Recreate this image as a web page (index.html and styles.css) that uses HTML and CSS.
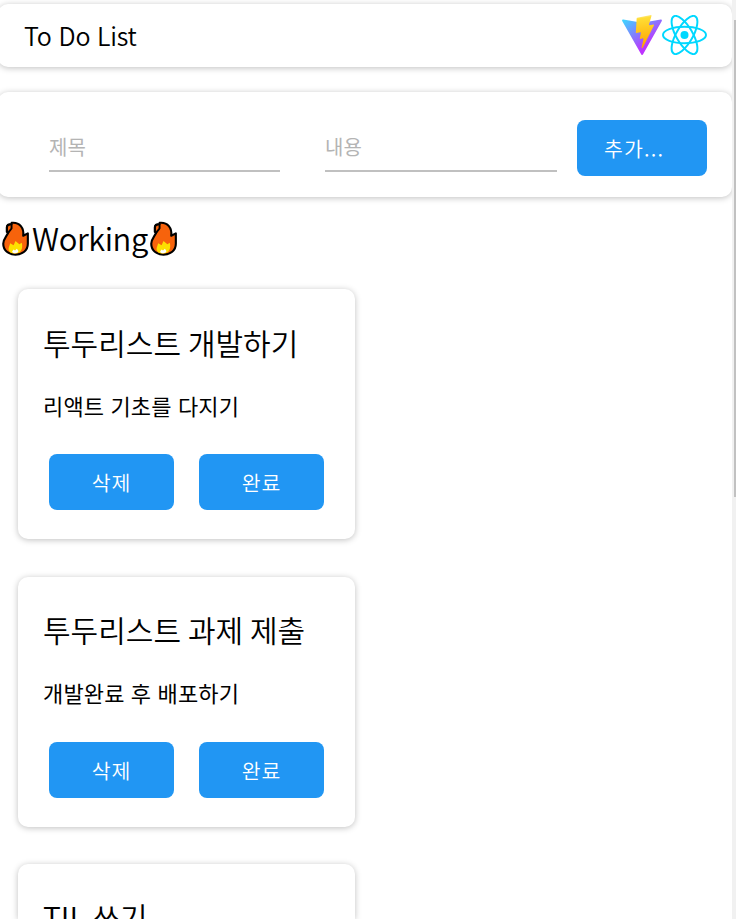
FILE: index.html
```
<!DOCTYPE html>
<html lang="ko">
<head>
    <meta charset="UTF-8">
    <meta name="viewport" content="width=device-width, initial-scale=1.0">
    <title>To Do List</title>
    <link rel="stylesheet" href="styles.css">
</head>
<body>
    <!-- shared icon shapes -->
    <svg class="symbols" width="0" height="0">
        <symbol id="fire" viewBox="0 0 28 36">
            <path d="M10 1.8C18.500 1 23 7 22 15.200L26.800 12.700V23.500C26.800 30.500 21 34.700 14 34.700S1.300 30.500 1.300 23.500C1.300 18 5.300 15.500 6.500 11.500L5 11V6.500C5 4 7 3 10 3Z" fill="#f7630c" stroke="#000" stroke-width="2.200" stroke-linejoin="round"/>
            <path d="M5.200 11V6.500C5.200 4.200 7.200 3.200 9.900 3.800V7.500C9 9.200 7.600 10 6.500 12Z" fill="#f7630c" stroke="#000" stroke-width="2"/>
            <path d="M7 27.500L8.500 22.800L12 25L14 20.500L18 24L20.500 22.500C22 28 20 33.500 14 33.600C9 33.600 6 31 7 27.500Z" fill="#fde000"/>
            <path d="M10.500 31.500L12 29.500L13.500 30.500L15.500 28.500L17 31C17 34 10.500 34 10.500 31.500Z" fill="#fff"/>
        </symbol>
    </svg>

    <div class="layout">
        <header class="header">
            <span>To Do List</span>
            <div class="logos">
                <svg class="vite" viewBox="0 0 256 257">
                    <defs>
                        <linearGradient id="viteBlue" x1="-.828%" x2="57.636%" y1="7.652%" y2="78.411%">
                            <stop offset="0%" stop-color="#41D1FF"/>
                            <stop offset="100%" stop-color="#BD34FE"/>
                        </linearGradient>
                        <linearGradient id="viteYellow" x1="43.376%" x2="50.316%" y1="2.242%" y2="89.030%">
                            <stop offset="0%" stop-color="#FFEA83"/>
                            <stop offset="8.333%" stop-color="#FFDD35"/>
                            <stop offset="100%" stop-color="#FFA800"/>
                        </linearGradient>
                    </defs>
                    <path fill="url(#viteBlue)" d="M255.153 37.938L134.897 252.976c-2.483 4.440-8.862 4.466-11.382.048L.875 37.958c-2.746-4.814 1.371-10.646 6.827-9.670l120.385 21.517a6.537 6.537 0 0 0 2.322-.004l117.867-21.483c5.438-.991 9.574 4.796 6.877 9.620Z"/>
                    <path fill="url(#viteYellow)" d="M185.432.063L96.440 17.501a3.268 3.268 0 0 0-2.634 3.014l-5.474 92.456a3.268 3.268 0 0 0 3.997 3.378l24.777-5.718c2.318-.535 4.413 1.507 3.936 3.838l-7.361 36.047c-.495 2.426 1.782 4.500 4.151 3.780l15.304-4.649c2.372-.720 4.652 1.360 4.150 3.788l-11.698 56.621c-.732 3.542 3.979 5.473 5.943 2.437l1.313-2.028l72.516-144.720c1.215-2.423-.880-5.186-3.540-4.672l-25.505 4.922c-2.396.462-4.435-1.770-3.759-4.114l16.646-57.705c.677-2.350-1.370-4.583-3.769-4.113Z"/>
                </svg>
                <svg class="react" viewBox="-11.500 -10.232 23 20.463">
                    <circle r="2.050" fill="#00d8ff"/>
                    <g fill="none" stroke="#00d8ff">
                        <ellipse rx="11" ry="4.200"/>
                        <ellipse rx="11" ry="4.200" transform="rotate(60)"/>
                        <ellipse rx="11" ry="4.200" transform="rotate(120)"/>
                    </g>
                </svg>
            </div>
        </header>

        <form class="add-form">
            <input class="add-input" type="text" placeholder="제목">
            <input class="add-input" type="text" placeholder="내용">
            <button class="btn add-btn" type="button">추가...</button>
        </form>

        <h2 class="list-title"><svg class="fire"><use href="#fire"/></svg><span>Working</span><svg class="fire"><use href="#fire"/></svg></h2>

        <div class="list">
            <div class="card">
                <h3>투두리스트 개발하기</h3>
                <p>리액트 기초를 다지기</p>
                <div class="card-buttons">
                    <button class="btn">삭제</button>
                    <button class="btn">완료</button>
                </div>
            </div>
            <div class="card">
                <h3>투두리스트 과제 제출</h3>
                <p>개발완료 후 배포하기</p>
                <div class="card-buttons">
                    <button class="btn">삭제</button>
                    <button class="btn">완료</button>
                </div>
            </div>
            <div class="card">
                <h3>TIL 쓰기</h3>
            </div>
        </div>
    </div>

    <div class="scrollbar"><div class="thumb"></div></div>
</body>
</html>
```
FILE: styles.css
```
* {
    box-sizing: border-box;
}
body {
    margin: 0;
    height: 919px;
    overflow: hidden;
    display: flex;
    background-color: #fff;
    color: #000;
    font-family: "Noto Sans CJK KR", sans-serif;
    font-weight: 350;
}
.symbols {
    position: absolute;
}
.layout {
    width: 734px;
    margin-left: -2px;
    padding-top: 4px;
    flex-shrink: 0;
}
.header, .add-form, .card {
    background-color: #fff;
    border-radius: 10px;
    box-shadow: 0 1px 6px rgba(0, 0, 0, 0.25);
}
.header {
    height: 63px;
    padding: 0 25px 2px 26px;
    display: flex;
    align-items: center;
    justify-content: space-between;
    font-size: 25px;
    letter-spacing: -0.2px;
}
.logos {
    display: flex;
    align-items: center;
}
.vite {
    width: 40px;
    height: 40px;
}
.react {
    width: 45px;
    height: 40px;
}
.add-form {
    height: 105px;
    margin-top: 25px;
    padding: 28px 25px 0 51px;
    display: flex;
    align-items: flex-start;
}
.add-input {
    width: 231px;
    height: 52px;
    margin-right: 45px;
    padding: 3px 0 0;
    border: none;
    border-bottom: 2px solid #c0c0c0;
    background: none;
    outline: none;
    font-family: inherit;
    font-size: 20px;
}
.add-input + .add-input {
    width: 232px;
    margin-right: 20px;
}
.add-input::placeholder {
    color: #b4b4b4;
}
.btn {
    width: 125px;
    height: 56px;
    padding: 0;
    border: none;
    border-radius: 8px;
    background-color: #2196f3;
    color: #fff;
    font-family: inherit;
    font-size: 20.5px;
    font-weight: 350;
    letter-spacing: 1px;
}
.add-btn {
    width: 130px;
    padding-left: 27px;
    text-align: left;
    letter-spacing: 1.200px;
}
.list-title {
    height: 45px;
    margin: 18px 0 29px 2px;
    display: flex;
    align-items: center;
    font-size: 31px;
    font-weight: 350;
    letter-spacing: -0.4px;
}
.list-title span {
    margin: -1px 0 0 1px;
}
.fire {
    width: 27px;
    height: 35px;
    margin: 2px 2px 0;
}
.fire:last-child {
    margin-left: 2px;
}
.list {
    padding-left: 20px;
}
.card {
    width: 337px;
    height: 250px;
    margin-bottom: 37.500px;
    padding: 30.900px 25px 0;
}
.card:last-child {
    height: 55px;
    margin-bottom: 0;
    padding-top: 30px;
    border-radius: 10px 10px 0 0;
}
.card h3 {
    margin: 0;
    font-size: 30px;
    line-height: 45px;
    font-weight: 350;
    word-spacing: -1.5px;
}
.card p {
    margin: 23.700px 0 0;
    font-size: 22px;
    line-height: 33px;
    font-weight: 400;
    letter-spacing: 0.15px;
}
.card-buttons {
    margin: 32.600px 0 0 6px;
    display: flex;
    gap: 25px;
}
.scrollbar {
    width: 4px;
    padding: 20px 0 0 2px;
    background-color: #f1f1f1;
}
.thumb {
    height: 477px;
    background-color: #c1c1c1;
}
```
